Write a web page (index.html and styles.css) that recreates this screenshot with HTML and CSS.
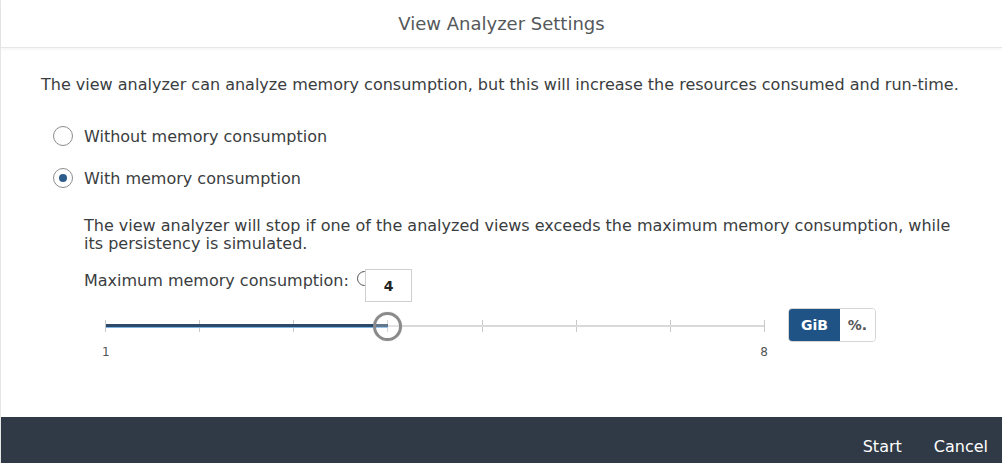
FILE: index.html
```html
<!DOCTYPE html>
<html>
<head>
<meta charset="utf-8">
<link rel="stylesheet" href="styles.css">
</head>
<body>
<div class="dialog">
  <header class="header">View Analyzer Settings</header>
  <main class="content">
    <p class="intro">The view analyzer can analyze memory consumption, but this will increase the resources consumed and run-time.</p>
    <div class="radios">
      <label class="radio"><span class="circle"></span>Without memory consumption</label>
      <label class="radio"><span class="circle checked"></span>With memory consumption</label>
    </div>
    <div class="sub">
      <p class="desc">The view analyzer will stop if one of the analyzed views exceeds the maximum memory consumption, while its persistency is simulated.</p>
      <div class="maxlabel">Maximum memory consumption: <span class="info"></span></div>
      <div class="slider-row">
        <div class="slider">
          <div class="ticks">
            <span></span><span></span><span></span><span></span><span></span><span></span><span></span><span></span>
          </div>
          <div class="track"></div>
          <div class="fill"></div>
          <div class="handle"></div>
          <div class="tooltip">4</div>
          <div class="labels"><span>1</span><span>8</span></div>
        </div>
        <div class="segmented">
          <span class="seg active">GiB</span><span class="seg">%.</span>
        </div>
      </div>
    </div>
  </main>
  <footer class="footer">
    <span class="btn">Start</span>
    <span class="btn">Cancel</span>
  </footer>
</div>
</body>
</html>
```
FILE: styles.css
```css
* { box-sizing: border-box; }
html, body { margin: 0; padding: 0; }
body {
  width: 1002px;
  height: 463px;
  overflow: hidden;
  background: #fff;
  font-family: "DejaVu Sans", Verdana, sans-serif;
  color: #3a3d40;
}
.dialog {
  display: flex;
  flex-direction: column;
  height: 463px;
  border-left: 1px solid #e6e6e6;
}
.header {
  height: 48px;
  display: flex;
  align-items: center;
  justify-content: center;
  font-size: 18px;
  color: #55585b;
  border-bottom: 1px solid #e6e6e6;
  box-shadow: 0 2px 3px rgba(0,0,0,0.04);
}
.content {
  flex: 1;
  padding: 28px 0 0 40px;
}
.intro {
  margin: 0;
  font-size: 16px;
  line-height: 18px;
}
.radios {
  margin-top: 21px;
  display: flex;
  flex-direction: column;
}
.radio {
  display: flex;
  align-items: center;
  height: 42px;
  font-size: 16px;
  padding-left: 12px;
  gap: 11px;
}
.circle {
  width: 20px;
  height: 20px;
  border: 1.5px solid #8c8c8c;
  border-radius: 50%;
  display: flex;
  align-items: center;
  justify-content: center;
}
.circle.checked::after {
  content: "";
  width: 8px;
  height: 8px;
  border-radius: 50%;
  background: #2e5d8c;
}
.sub {
  padding-left: 43px;
  margin-top: 18px;
}
.desc {
  margin: 0;
  width: 870px;
  font-size: 16px;
  line-height: 18px;
}
.maxlabel {
  margin-top: 19px;
  font-size: 16px;
  line-height: 18px;
  display: flex;
  align-items: center;
  gap: 4px;
}
.info {
  width: 15px;
  height: 15px;
  border: 1.5px solid #555;
  border-radius: 50%;
  margin-left: 4px;
  margin-top: -6px;
}
.slider-row {
  display: flex;
  align-items: flex-start;
  margin-top: 20px;
  padding-left: 22px;
  gap: 24px;
}
.slider {
  position: relative;
  width: 658px;
  height: 44px;
}
.ticks {
  position: absolute;
  left: -1px;
  right: -1px;
  top: 10px;
  display: flex;
  justify-content: space-between;
}
.ticks span {
  width: 1px;
  height: 12px;
  background: #c9c9c9;
}
.track {
  position: absolute;
  left: 0;
  right: 0;
  top: 15px;
  height: 2px;
  background: #d9d9d9;
}
.fill {
  position: absolute;
  left: 0;
  top: 14px;
  width: 282px;
  height: 4px;
  background: #2c4a68;
  border-bottom: 1px solid #7fb4e6;
}
.handle {
  position: absolute;
  left: 267px;
  top: 2px;
  width: 29px;
  height: 29px;
  border-radius: 50%;
  border: 3px solid #8a8a8a;
  background: rgba(255,255,255,0.25);
  box-shadow: 0 0 1px rgba(0,0,0,0.3);
}
.tooltip {
  position: absolute;
  left: 259px;
  top: -41px;
  width: 47px;
  height: 33px;
  background: #fff;
  border: 1px solid #cfcfcf;
  display: flex;
  align-items: center;
  justify-content: center;
  font-size: 14px;
  font-weight: bold;
  color: #222;
}
.labels {
  position: absolute;
  left: -4px;
  right: -4px;
  top: 35px;
  display: flex;
  justify-content: space-between;
  font-size: 12px;
  color: #555;
}
.segmented {
  display: flex;
  margin-top: -2px;
  border: 1px solid #d5d5d5;
  border-radius: 4px;
  overflow: hidden;
  height: 34px;
}
.seg {
  display: flex;
  align-items: center;
  justify-content: center;
  font-size: 14px;
  font-weight: bold;
  color: #555;
  background: #fff;
  width: 35px;
}
.seg.active {
  width: 51px;
  background: #1f5386;
  color: #fff;
}
.footer {
  height: 46px;
  background: #2f3a46;
  display: flex;
  justify-content: flex-end;
  align-items: center;
  gap: 32px;
  padding: 12px 14px 0 0;
}
.btn {
  color: #fff;
  font-size: 16px;
}
```
